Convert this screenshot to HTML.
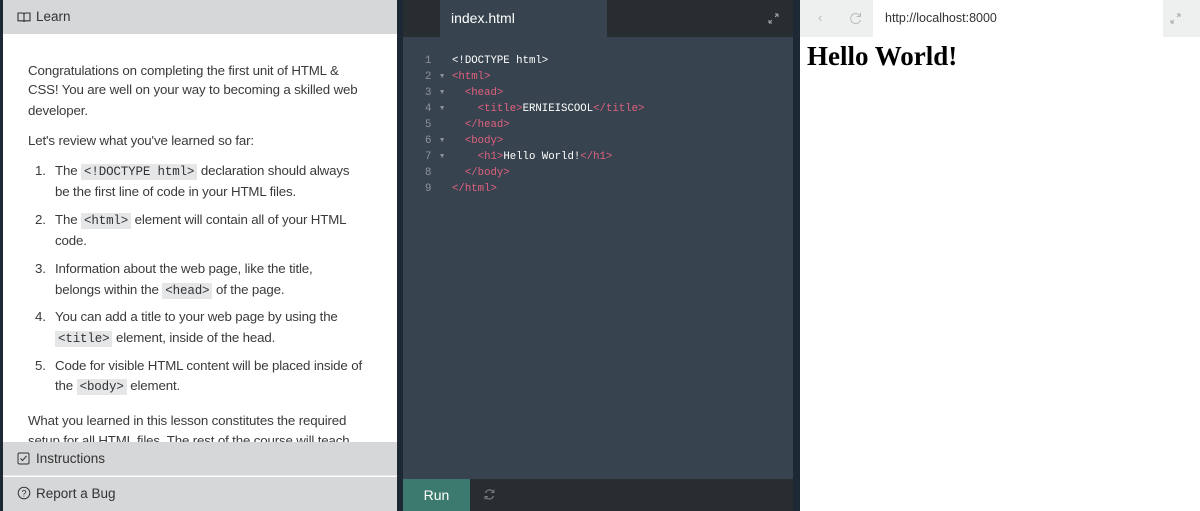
<!DOCTYPE html>
<html><head><style>
*{margin:0;padding:0;box-sizing:border-box}
body{width:1200px;height:511px;background:#1c2833;position:relative;overflow:hidden;font-family:"Liberation Sans",sans-serif}
.abs{position:absolute}
#left{left:3px;top:0;width:394px;height:511px;background:#fff;overflow:hidden}
.hdr{position:absolute;left:0;width:394px;background:#d6d7d9;color:#333;font-size:13.5px;padding-left:33px;line-height:34px}
.t{position:absolute;left:25px;font-size:13.3px;color:#3a3a3a;white-space:nowrap;line-height:20px;letter-spacing:-0.15px}
.n{position:absolute;left:32px}
.i{left:52px}
code{font-family:"Liberation Mono",monospace;font-size:12.5px;background:#e4e6e8;padding:1px 3px;color:#333}
#ed{left:403px;top:0;width:390px;height:511px;background:#37444f}
.cl{position:absolute;left:0;width:390px;font-family:"Liberation Mono",monospace;font-size:10.7px;line-height:16px;color:#fff;white-space:pre}
.ln{position:absolute;left:22px;color:#8a949c}
.ar{position:absolute;left:37px;color:#8a949c;font-size:7px}
.cd{position:absolute;left:49px}
.p{color:#e0607e}
#br{left:800px;top:0;width:400px;height:511px;background:#fff}
</style></head><body>
<div id="left" class="abs">
 <div class="hdr" style="top:0">Learn</div>
 <svg class="abs" style="left:14px;top:11px" width="14" height="12" viewBox="0 0 14 12"><path d="M1 2h4.5c1 0 1.5.5 1.5 1.5V11c0-.8-.6-1.2-1.3-1.2H1zM13 2H8.5C7.5 2 7 2.5 7 3.5V11c0-.8.6-1.2 1.3-1.2H13z" fill="none" stroke="#333" stroke-width="1.1"/></svg>
 <div class="t" style="top:61px">Congratulations on completing the first unit of HTML &amp;</div>
 <div class="t" style="top:80px">CSS! You are well on your way to becoming a skilled web</div>
 <div class="t" style="top:101px">developer.</div>
 <div class="t" style="top:131px">Let's review what you've learned so far:</div>
 <div class="t n" style="top:161px">1.</div><div class="t i" style="top:161px">The <code>&lt;!DOCTYPE html&gt;</code> declaration should always</div>
 <div class="t i" style="top:182px">be the first line of code in your HTML files.</div>
 <div class="t n" style="top:210px">2.</div><div class="t i" style="top:210px">The <code>&lt;html&gt;</code> element will contain all of your HTML</div>
 <div class="t i" style="top:231px">code.</div>
 <div class="t n" style="top:259px">3.</div><div class="t i" style="top:259px">Information about the web page, like the title,</div>
 <div class="t i" style="top:280px">belongs within the <code>&lt;head&gt;</code> of the page.</div>
 <div class="t n" style="top:307px">4.</div><div class="t i" style="top:307px">You can add a title to your web page by using the</div>
 <div class="t i" style="top:328px"><code>&lt;title&gt;</code> element, inside of the head.</div>
 <div class="t n" style="top:356px">5.</div><div class="t i" style="top:356px">Code for visible HTML content will be placed inside of</div>
 <div class="t i" style="top:376px">the <code>&lt;body&gt;</code> element.</div>
 <div class="t" style="top:411px">What you learned in this lesson constitutes the required</div>
 <div class="t" style="top:431px">setup for all HTML files. The rest of the course will teach</div>
 <div class="hdr" style="top:442px;height:34px;border-bottom:1px solid #e8e8e8">Instructions</div>
 <svg class="abs" style="left:14px;top:452px" width="13" height="13"><rect x="1" y="1" width="11" height="11" rx="1.5" fill="none" stroke="#333"/><path d="M3.5 6.5l2 2 4-4.5" fill="none" stroke="#333"/></svg>
 <div class="hdr" style="top:477px;height:34px">Report a Bug</div>
 <svg class="abs" style="left:14px;top:486px" width="14" height="14"><circle cx="7" cy="7" r="5.8" fill="none" stroke="#333"/><text x="7" y="10.5" font-size="9" text-anchor="middle" fill="#333" font-family="Liberation Sans">?</text></svg>
</div>
<div id="ed" class="abs">
 <div class="abs" style="left:0;top:0;width:390px;height:37px;background:#282d31"></div>
 <div class="abs" style="left:37px;top:0;width:167px;height:37px;background:#37444f;color:#fff;font-size:14px;line-height:37px;padding-left:11px">index.html</div>
 <svg class="abs" style="left:365px;top:13px" width="11" height="11"><path d="M1 10l3-3M1 10V7M1 10h3M10 1L7 4M10 1v3M10 1H7" stroke="#aaa" fill="none"/></svg>
 <div class="cl" style="top:53px"><span class="ln">1</span><span class="cd">&lt;!DOCTYPE html&gt;</span></div>
 <div class="cl" style="top:69px"><span class="ln">2</span><span class="ar">▼</span><span class="cd p">&lt;html&gt;</span></div>
 <div class="cl" style="top:85px"><span class="ln">3</span><span class="ar">▼</span><span class="cd p">  &lt;head&gt;</span></div>
 <div class="cl" style="top:101px"><span class="ln">4</span><span class="ar">▼</span><span class="cd"><span class="p">    &lt;title&gt;</span>ERNIEISCOOL<span class="p">&lt;/title&gt;</span></span></div>
 <div class="cl" style="top:117px"><span class="ln">5</span><span class="cd p">  &lt;/head&gt;</span></div>
 <div class="cl" style="top:133px"><span class="ln">6</span><span class="ar">▼</span><span class="cd p">  &lt;body&gt;</span></div>
 <div class="cl" style="top:149px"><span class="ln">7</span><span class="ar">▼</span><span class="cd"><span class="p">    &lt;h1&gt;</span>Hello World!<span class="p">&lt;/h1&gt;</span></span></div>
 <div class="cl" style="top:165px"><span class="ln">8</span><span class="cd p">  &lt;/body&gt;</span></div>
 <div class="cl" style="top:181px"><span class="ln">9</span><span class="cd p">&lt;/html&gt;</span></div>
 <div class="abs" style="left:0;top:479px;width:390px;height:32px;background:#282d31"></div>
 <div class="abs" style="left:0;top:479px;width:67px;height:32px;background:#3c7a70;color:#fff;font-size:14px;line-height:32px;text-align:center">Run</div>
 <svg class="abs" style="left:80px;top:488px" width="13" height="13"><path d="M10.5 4A4.5 4.5 0 0 0 2.5 5M2.5 9A4.5 4.5 0 0 0 10.5 8" stroke="#777" fill="none" stroke-width="1.3"/><path d="M11 1.5v3h-3M2 11.5v-3h3" stroke="#777" fill="none"/></svg>
</div>
<div id="br" class="abs">
 <div class="abs" style="left:0;top:0;width:400px;height:37px;background:#eeefef"></div>
 <div class="abs" style="left:73px;top:0;width:290px;height:37px;background:#fff;font-size:12.5px;color:#333;line-height:37px;padding-left:12px">http://localhost:8000</div>
 <div class="abs" style="left:18px;top:10px;color:#bbb;font-size:13px">‹</div>
 <svg class="abs" style="left:49px;top:11px" width="14" height="14"><path d="M11 5A5 5 0 1 0 11.5 9" stroke="#bbb" fill="none"/><path d="M11.5 1.5v4h-4" stroke="#bbb" fill="none"/></svg>
 <svg class="abs" style="left:370px;top:13px" width="11" height="11"><path d="M1 10l3-3M1 10V7M1 10h3M10 1L7 4M10 1v3M10 1H7" stroke="#aaa" fill="none"/></svg>
 <div class="abs" style="left:7px;top:41px;font-family:'Liberation Serif',serif;font-weight:bold;font-size:27px;color:#000">Hello World!</div>
</div>
</body></html>
